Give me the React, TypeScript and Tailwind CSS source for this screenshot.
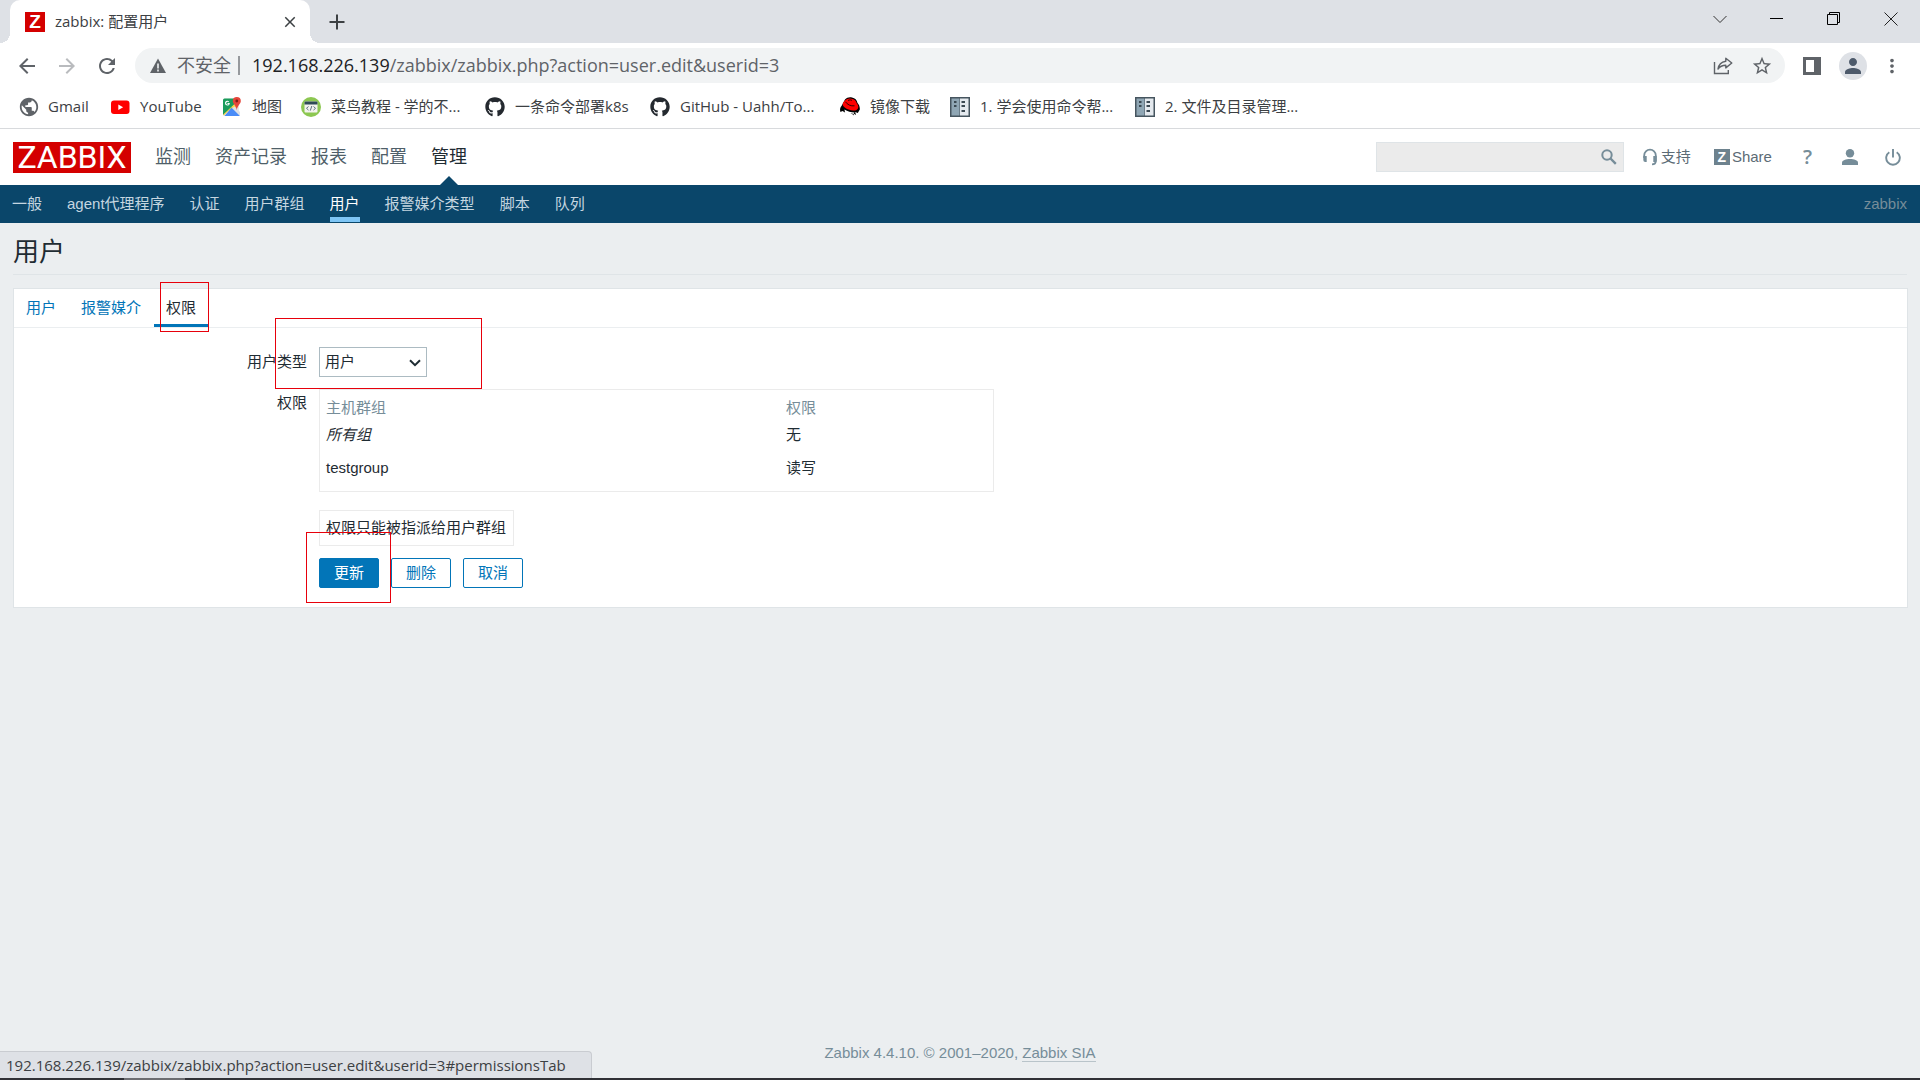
import { useState } from "react";
import type { ReactNode } from "react";
import {
  MdArrowBack,
  MdArrowForward,
  MdClose,
  MdMoreVert,
  MdPerson,
  MdPublic,
  MdRefresh,
  MdStarBorder,
} from "react-icons/md";
import { FaGithub } from "react-icons/fa";

/* ---------- icons ---------- */

function ZabbixFavicon() {
  return (
    <span className="grid size-5 shrink-0 place-items-center bg-[#d40000] font-['Liberation_Sans',sans-serif] text-[19px] leading-none font-bold text-white">
      Z
    </span>
  );
}

function YouTubeIcon() {
  return (
    <svg viewBox="0 0 20 20" className="size-5">
      <rect x="1" y="3.5" width="18.5" height="13.5" rx="3" fill="#f00" />
      <path d="M8.3 7.4v5.6l4.8-2.8z" fill="#fff" />
    </svg>
  );
}

function MapsIcon() {
  return (
    <svg viewBox="0 0 20 20" className="size-5">
      <path d="M1 3a1.500 1.500 0 0 1 1.500-1.500H17V19H2.500A1.500 1.500 0 0 1 1 17.500z" fill="#e8e8e8" />
      <path d="M1 3a1.500 1.500 0 0 1 1.500-1.500H13l1 6L1 18z" fill="#1a9c5b" />
      <path d="M9.500 10.500 18 19H2.500z" fill="#4a8cf7" />
      <path d="M1.300 17.500 13 6.500l2.500 2.500-3 3-2.800-1.600L2 18.500z" fill="#fbd34c" />
      <path d="M12.500 9.500 18 15v3.500l-7.500-7.500z" fill="#dfe1e5" />
      <path d="M7.700 5.900H5.500v1h1.100a1.300 1.300 0 1 1-.3-1.700l.8-.8a2.400 2.400 0 1 0 .7 2z" fill="#fff" />
      <path d="M14.800 0a4 4 0 0 1 4 4c0 3-3.200 4-4 9-.8-5-4-6-4-9a4 4 0 0 1 4-4z" fill="#e5453a" />
      <circle cx="14.800" cy="4" r="1.400" fill="#7d1d17" />
    </svg>
  );
}

function RunoobIcon() {
  return (
    <svg viewBox="0 0 20 20" className="size-5">
      <circle cx="10" cy="10" r="10" fill="#8cc751" />
      <rect x="3.500" y="4.500" width="13" height="11" rx="1" fill="#f3f3ee" />
      <path d="M3.500 5.500a1 1 0 0 1 1-1h11a1 1 0 0 1 1 1V7.500h-13z" fill="#2f4a56" />
      <path d="M7.500 9.500 5.500 11.300l2 1.800M12.500 9.500l2 1.800-2 1.800M10.800 9l-1.500 4.600" fill="none" stroke="#5c7180" strokeWidth="1" />
    </svg>
  );
}

function RedHatIcon() {
  return (
    <svg viewBox="0 0 20 20" className="size-5">
      <path d="M5 2.500C7 .5 9.500 0 12 .6c3 .6 5 2.400 5.500 5.400 1.600 1.500 2.500 4 2.300 6.500l-2 3.500-2.600-1 .8 3-2.500-1.500.5 2-2.500-2-3-1.500-3.500.5-2.500-1.500L.5 15c-.8-2-.5-4.500 1-6z" fill="#000" />
      <path d="M5 3.500C6.800 1.600 9 1 11.500 1.700c2.800.6 4.800 2 5.300 4.800 1.700 1.700 1.900 3.600 1 5.200-1.500 2.500-5.800 2.200-9.300.8C4.500 11 2.200 8.700 2.800 6.500c.3-1.200 1.200-1.900 2.200-3z" fill="#f00" />
      <path d="M5.500 4.800c1.500 2.700 5.500 4.600 9 4M8 3.500c1.500-.8 3-.8 4 0" fill="none" stroke="#000" strokeWidth=".8" />
      <path d="M4.500 12.500c3 2 6.500 3 10 3l-1 1.500-3-1-2.500 1-3-1.200z" fill="#fff" />
    </svg>
  );
}

function BookIcon() {
  return (
    <svg viewBox="0 0 20 20" className="size-5">
      <rect width="20" height="20" fill="#46555f" />
      <rect x="1.500" y="1.500" width="8" height="17" fill="#8fa6b4" />
      <rect x="10" y="1.500" width="8.500" height="17" fill="#e4e9ee" />
      <path d="M4 4h2.500v2H4zM4 8h2.500v2H4zM11.500 4h3.500v2h-3.500zM11.500 8h3.500v2h-3.500zM11.500 13h3.500v2h-3.500z" fill="#3b4952" />
    </svg>
  );
}

function ShareIcon() {
  return (
    <svg viewBox="0 0 20 20" className="size-5" fill="none" stroke="#5f6368" strokeWidth="1.400">
      <path d="M1.500 6v11.500h13.800V14" />
      <path d="M12.800 2.200 18.800 7l-6 4.900V9.200c-3.600 0-6 1.200-7.800 3.800.6-4.200 3-7 7.800-7.800z" strokeLinejoin="round" />
    </svg>
  );
}

function SearchIcon() {
  return (
    <svg viewBox="0 0 16 16" className="size-4" fill="none" stroke="#768d99">
      <circle cx="6" cy="6" r="4.700" strokeWidth="2" />
      <path d="m9.500 9.500 5.300 5.300" strokeWidth="2.400" />
    </svg>
  );
}

function HeadsetIcon() {
  return (
    <svg viewBox="0 0 16 18" className="h-[18px] w-4" fill="none">
      <path d="M2.200 10V7.500a5.800 5.800 0 0 1 11.600 0V13c0 2-1.300 3.300-3.800 3.300" stroke="#768d99" strokeWidth="1.800" />
      <path d="M1.300 8h3.400v6H3.300a2 2 0 0 1-2-2zM11.300 8h3.400v5.200l-.8.800h-2.600z" fill="#768d99" />
    </svg>
  );
}

function UserIcon() {
  return (
    <svg viewBox="0 0 16 18" className="h-[18px] w-4" fill="#768d99">
      <circle cx="8" cy="5.200" r="4.200" />
      <path d="M0 17v-2.300C0 12.300 4 11 8 11s8 1.300 8 3.700V17z" />
    </svg>
  );
}

function PowerIcon() {
  return (
    <svg viewBox="0 0 16 18" className="h-[18px] w-4" fill="none" stroke="#768d99" strokeWidth="1.900">
      <path d="M8 1v8.500M4.300 4.200a6.800 6.800 0 1 0 7.400 0" />
    </svg>
  );
}

/* ---------- browser chrome ---------- */

type Bookmark = { icon: ReactNode; label: string; width: string };

const bookmarks: Bookmark[] = [
  { icon: <MdPublic className="size-[22px] text-[#5f6368]" />, label: "Gmail", width: "w-[92px]" },
  { icon: <YouTubeIcon />, label: "YouTube", width: "w-[112px]" },
  { icon: <MapsIcon />, label: "地图", width: "w-[79px]" },
  { icon: <RunoobIcon />, label: "菜鸟教程 - 学的不...", width: "w-[184px]" },
  { icon: <FaGithub className="size-5 text-[#24292f]" />, label: "一条命令部署k8s", width: "w-[165px]" },
  { icon: <FaGithub className="size-5 text-[#24292f]" />, label: "GitHub - Uahh/To...", width: "w-[190px]" },
  { icon: <RedHatIcon />, label: "镜像下载", width: "w-[110px]" },
  { icon: <BookIcon />, label: "1. 学会使用命令帮...", width: "w-[185px]" },
  { icon: <BookIcon />, label: "2. 文件及目录管理...", width: "w-[185px]" },
];

function TabStrip() {
  return (
    <div className="flex h-[43px] bg-[#dee1e6] pl-[10px]">
      <div className="relative flex w-[300px] items-center rounded-t-[10px] bg-white pl-[15px] pr-[10px]">
        <span className="absolute bottom-0 -left-[10px] size-[10px] bg-[radial-gradient(circle_at_0_0,#dee1e6_10px,#fff_10px)]" />
        <span className="absolute -right-[10px] bottom-0 size-[10px] bg-[radial-gradient(circle_at_100%_0,#dee1e6_10px,#fff_10px)]" />
        <ZabbixFavicon />
        <span className="ml-[10px] flex-1 text-[15px] text-[#3c4043]">zabbix: 配置用户</span>
        <button aria-label="关闭标签页" className="grid size-5 place-items-center">
          <MdClose className="size-[18px] text-[#3c4043]" />
        </button>
      </div>
      <button aria-label="新标签页" className="ml-[17px] grid w-5 place-items-center">
        <svg viewBox="0 0 16 16" className="size-4" stroke="#3c4043" strokeWidth="2">
          <path d="M8 .5v15M.5 8h15" />
        </svg>
      </button>
      <div className="ml-auto flex text-black">
        <button aria-label="搜索标签页" className="grid w-[57px] place-items-center pb-[6px]">
          <svg viewBox="0 0 14 14" className="size-[14px]" fill="none" stroke="#333">
            <path d="M.5 4 7 10.500 13.500 4" />
          </svg>
        </button>
        <button aria-label="最小化" className="grid w-[57px] place-items-center pb-[6px]">
          <span className="h-px w-[13px] bg-black" />
        </button>
        <button aria-label="还原" className="grid w-[57px] place-items-center pb-[6px]">
          <svg viewBox="0 0 14 14" className="size-[14px]" fill="none" stroke="#000">
            <path d="M.5 2.500h10v10H.5zM2.500 2.500V.5h10v10h-2" />
          </svg>
        </button>
        <button aria-label="关闭" className="grid w-[58px] place-items-center pb-[6px]">
          <svg viewBox="0 0 14 14" className="size-[14px]" fill="none" stroke="#222">
            <path d="m.5.5 13 13M13.500.5l-13 13" />
          </svg>
        </button>
      </div>
    </div>
  );
}

function Toolbar() {
  return (
    <div className="flex h-[45px] items-center bg-white pr-[17px] pl-[15px] text-[#5f6368]">
      <button aria-label="后退" className="mr-[16px]">
        <MdArrowBack className="size-6" />
      </button>
      <button aria-label="前进" className="mr-[16px] text-[#b9bbbe]">
        <MdArrowForward className="size-6" />
      </button>
      <button aria-label="重新加载" className="mr-[16px]">
        <MdRefresh className="size-6" />
      </button>
      <div className="flex h-[35px] flex-1 items-center rounded-full bg-[#f1f3f4] pr-[12px] pl-[14px]">
        <svg viewBox="0 0 18 16" className="mr-[10px] h-4 w-[18px]">
          <path d="M9 0.500 17 15H1z" fill="#5f6368" />
          <path d="M9 5.500v5M9 11.500v2" stroke="#f1f3f4" strokeWidth="1.600" />
        </svg>
        <span className="text-[18px]">不安全</span>
        <span className="mr-[12px] ml-[7px] h-[19px] w-[2px] bg-[#96999d]" />
        <div className="flex-1 text-[18px]">
          <span className="text-[#202124]">192.168.226.139</span>/zabbix/zabbix.php?action=user.edit&amp;userid=3
        </div>
        <button aria-label="分享" className="mr-[18px]">
          <ShareIcon />
        </button>
        <button aria-label="添加书签">
          <MdStarBorder className="size-[22px]" />
        </button>
      </div>
      <button aria-label="侧边栏" className="ml-[18px]">
        <svg viewBox="0 0 18 18" className="size-[18px]">
          <path d="M0 0h18v18H0z" fill="#5f6368" />
          <path d="M3 3h8v12H3z" fill="#fff" />
        </svg>
      </button>
      <button aria-label="个人资料" className="ml-[18px] grid size-7 place-items-center rounded-full bg-[#dee1e6]">
        <MdPerson className="size-6 text-[#4d5a6b]" />
      </button>
      <button aria-label="菜单" className="ml-[14px]">
        <MdMoreVert className="size-[22px]" />
      </button>
    </div>
  );
}

function BookmarksBar() {
  return (
    <nav className="flex h-[41px] items-center border-b border-[#d8dadd] bg-white pb-[3px] pl-[18px] text-[15px] text-[#3c4043]">
      {bookmarks.map((b) => (
        <a key={b.label} href="#" className={`flex shrink-0 items-center whitespace-nowrap ${b.width}`}>
          <span className="mr-[10px] grid w-5 shrink-0 place-items-center">{b.icon}</span>
          {b.label}
        </a>
      ))}
    </nav>
  );
}

/* ---------- zabbix ---------- */

const mainMenu = ["监测", "资产记录", "报表", "配置", "管理"];
const subMenu = ["一般", "agent代理程序", "认证", "用户群组", "用户", "报警媒介类型", "脚本", "队列"];
const tabs = ["用户", "报警媒介", "权限"];
const permissions = [
  { group: "所有组", right: "无", all: true },
  { group: "testgroup", right: "读写", all: false },
];

function Header() {
  return (
    <header className="flex h-14 items-center bg-white pr-[12px] pl-[13px]">
      <a
        href="#"
        className="grid h-[31px] w-[118px] place-items-center bg-[#d40000] font-['Roboto',sans-serif] text-[32px] leading-[31px] text-white"
      >
        ZABBIX
      </a>
      <nav className="ml-6 flex h-full gap-6 text-[18px] text-[#4f5f69]">
        {mainMenu.map((m) =>
          m === "管理" ? (
            <a key={m} href="#" className="relative flex items-center text-[#1f2c33]">
              {m}
              <span className="absolute bottom-0 left-1/2 -translate-x-1/2 border-x-[9px] border-b-[9px] border-x-transparent border-b-[#0a466a]" />
            </a>
          ) : (
            <a key={m} href="#" className="flex items-center">
              {m}
            </a>
          ),
        )}
      </nav>
      <div className="ml-auto flex items-center text-[15px] text-[#5c6b75]">
        <form className="relative mr-[18px]" role="search" onSubmit={(e) => e.preventDefault()}>
          <input
            aria-label="搜索"
            className="block h-[30px] w-[248px] border border-[#dfe4e7] bg-[#ebebeb] pr-8 pl-2 outline-none"
          />
          <button aria-label="搜索" className="absolute top-[7px] right-[7px]">
            <SearchIcon />
          </button>
        </form>
        <a href="#" className="mr-[23px] flex items-center gap-[3px]">
          <HeadsetIcon />
          支持
        </a>
        <a href="#" className="mr-[31px] flex items-center gap-[2px]">
          <span className="grid size-4 place-items-center bg-[#6d828e] text-[14px] leading-none font-bold text-white">
            Z
          </span>
          Share
        </a>
        <a href="#" aria-label="帮助" className="mr-[30px] font-['Open_Sans',sans-serif] text-[20px] leading-none font-semibold text-[#768d99]">
          ?
        </a>
        <a href="#" aria-label="用户资料" className="mr-[27px]">
          <UserIcon />
        </a>
        <a href="#" aria-label="登出" className="mr-[7px]">
          <PowerIcon />
        </a>
      </div>
    </header>
  );
}

function SubNav() {
  return (
    <nav className="flex h-[38px] justify-between bg-[#0a466a] pr-[13px] pl-[12px] text-[15px] text-[#c5d6e0]">
      <div className="flex gap-[25px]">
        {subMenu.map((m) =>
          m === "用户" ? (
            <a key={m} href="#" className="relative flex items-center text-white">
              {m}
              <span className="absolute inset-x-0 bottom-px h-[5px] bg-[#7ec5f5]" />
            </a>
          ) : (
            <a key={m} href="#" className="flex items-center">
              {m}
            </a>
          ),
        )}
      </div>
      <span className="flex items-center text-[#768d99]">zabbix</span>
    </nav>
  );
}

function UserForm() {
  const [type, setType] = useState("用户");
  return (
    <section className="mt-[13px] mr-[12px] ml-[13px] border border-[#dfe4e7] bg-white">
      <div className="flex h-[39px] border-b border-[#ebeef0] text-[#0275b8]">
        {tabs.map((t) =>
          t === "权限" ? (
            <a key={t} href="#" className="relative flex items-center border-b-[3px] border-[#0275b8] pr-[13px] pl-3 pt-[3px] text-[#1f2c33]">
              {t}
              <span className="pointer-events-none absolute -top-[7px] right-0 left-[6px] h-[50px] border border-red-600" />
            </a>
          ) : (
            <a key={t} href="#" className="flex items-center pr-[13px] pl-[12px]">
              {t}
            </a>
          ),
        )}
      </div>
      <form className="pt-[19px] pb-[19px]" onSubmit={(e) => e.preventDefault()}>
        <div className="relative flex">
          <label htmlFor="user-type" className="w-[293px] shrink-0 text-right leading-[30px]">
            用户类型
          </label>
          <div className="relative ml-3">
            <select
              id="user-type"
              value={type}
              onChange={(e) => setType(e.target.value)}
              className="block h-[30px] w-[108px] appearance-none border border-[#acbbc2] bg-white pl-[5px] outline-none"
            >
              <option>用户</option>
              <option>管理员</option>
              <option>超级管理员</option>
            </select>
            <svg
              viewBox="0 0 12 8"
              className="pointer-events-none absolute top-[12px] right-[6px] h-2 w-3"
              fill="none"
              stroke="#1f2c33"
              strokeWidth="2"
            >
              <path d="m1 1.200 5 5 5-5" />
            </svg>
          </div>
          <span className="pointer-events-none absolute -top-[29px] left-[261px] h-[71px] w-[207px] border border-red-600" />
        </div>

        <div className="mt-3 flex">
          <span className="w-[293px] shrink-0 text-right leading-[28px]">权限</span>
          <div className="ml-3">
            <div className="w-[675px] border border-[#ebebeb] pt-2 pb-[7px] pl-[6px]">
              <table className="w-full table-fixed text-left">
                <thead className="text-[#768d99]">
                  <tr className="h-[20px] leading-[20px]">
                    <th className="w-[460px] p-0 font-normal">主机群组</th>
                    <th className="p-0 font-normal">权限</th>
                  </tr>
                </thead>
                <tbody>
                  {permissions.map((p) => (
                    <tr key={p.group} className="h-[33px] leading-[20px]">
                      <td className={p.all ? "p-0 italic" : "p-0"}>{p.group}</td>
                      <td className="p-0">{p.right}</td>
                    </tr>
                  ))}
                </tbody>
              </table>
            </div>
            <div className="mt-[18px] w-fit border border-[#ebebeb] pr-[7px] pl-[6px] leading-[34px]">权限只能被指派给用户群组</div>
            <div className="mt-3 flex gap-[12px]">
              <div className="relative">
                <button
                  type="submit"
                  className="h-[30px] w-[60px] rounded-[2px] border border-[#0275b8] bg-[#0275b8] text-white"
                >
                  更新
                </button>
                <span className="pointer-events-none absolute -top-[26px] -left-[13px] h-[71px] w-[85px] border border-red-600" />
              </div>
              <button type="button" className="h-[30px] w-[60px] rounded-[2px] border border-[#0275b8] text-[#0275b8]">
                删除
              </button>
              <button type="button" className="h-[30px] w-[60px] rounded-[2px] border border-[#0275b8] text-[#0275b8]">
                取消
              </button>
            </div>
          </div>
        </div>
      </form>
    </section>
  );
}

export default function App() {
  return (
    <div className="flex min-h-screen flex-col bg-[#ebeef0]">
      <div className="font-['Open_Sans','Noto_Sans_CJK_SC',sans-serif]">
        <TabStrip />
        <Toolbar />
        <BookmarksBar />
      </div>
      <div className="flex flex-1 flex-col font-['Liberation_Sans','Noto_Sans_CJK_SC',sans-serif] text-[15px] text-[#1f2c33]">
        <Header />
        <SubNav />
        <main className="flex-1">
          <h1 className="mx-[13px] border-b border-[#dfe4e7] pt-[11px] pb-[4px] text-[26px] leading-[36px]">用户</h1>
          <UserForm />
        </main>
        <footer className="pb-[15px] text-center leading-6 text-[#768d99]">
          Zabbix 4.4.10. © 2001–2020,{" "}
          <a href="#" className="border-b border-[#b9c4ca]">
            Zabbix SIA
          </a>
        </footer>
      </div>
      <div className="fixed inset-x-0 bottom-0 font-['Open_Sans',sans-serif]">
        <div className="w-fit min-w-[592px] rounded-tr-[4px] border-t border-r border-[#c9ccd1] bg-[#dee1e6] pr-[11px] pl-[6px] text-[15px] leading-[26px] text-[#3c4043]">
          192.168.226.139/zabbix/zabbix.php?action=user.edit&amp;userid=3#permissionsTab
        </div>
        <div className="flex h-[2px] bg-[#303136] pl-[124px]">
          <span className="w-[61px] bg-[#6c6d71]" />
        </div>
      </div>
    </div>
  );
}
